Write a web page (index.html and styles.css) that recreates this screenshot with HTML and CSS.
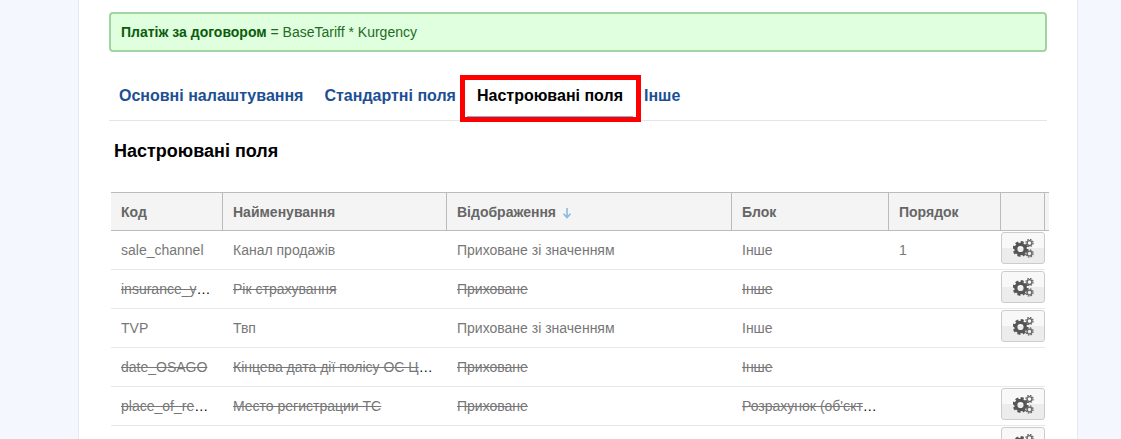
FILE: index.html
```html
<!DOCTYPE html>
<html lang="uk">
<head>
<meta charset="utf-8">
<title>Настроювані поля</title>
<link rel="stylesheet" href="styles.css">
</head>
<body>
<svg class="defs" width="0" height="0" aria-hidden="true">
  <defs>
    <g id="gear-big">
      <circle cx="0" cy="0" r="4.7" fill="none" stroke="#555" stroke-width="3.2"/>
      <circle cx="0" cy="0" r="6.7" fill="none" stroke="#555" stroke-width="2.4" stroke-dasharray="3 2.26"/>
    </g>
    <g id="gear-small">
      <circle cx="0" cy="0" r="2.4" fill="none" stroke="#666" stroke-width="1.4"/>
      <circle cx="0" cy="0" r="3.6" fill="none" stroke="#666" stroke-width="1.2" stroke-dasharray="1.6 1.23"/>
    </g>
    <symbol id="cogs" viewBox="0 0 21 19">
      <use href="#gear-big" x="7.5" y="10"/>
      <use href="#gear-small" x="16.5" y="4"/>
      <use href="#gear-small" x="16.5" y="14.5"/>
    </symbol>
  </defs>
</svg>
<main class="panel">
  <div class="alert"><b>Платіж за договором</b> = BaseTariff * Kurgency</div>
  <nav class="tabs">
    <a class="tab">Основні налаштування</a>
    <a class="tab">Стандартні поля</a>
    <a class="tab tab-active">Настроювані поля<span class="highlight"></span></a>
    <a class="tab">Інше</a>
  </nav>
  <h2 class="title">Настроювані поля</h2>
  <table class="grid">
    <colgroup>
      <col class="c-code"><col class="c-name"><col class="c-view"><col class="c-block"><col class="c-order"><col class="c-act"><col class="c-gap">
    </colgroup>
    <thead>
      <tr>
        <th>Код</th>
        <th>Найменування</th>
        <th>Відображення <svg class="sort" width="10" height="12" viewBox="0 0 10 12"><path d="M5 1v9M1.5 6.8 5 10.5l3.5-3.7" fill="none" stroke="#8db8de" stroke-width="1.6"/></svg></th>
        <th>Блок</th>
        <th>Порядок</th>
        <th></th>
        <th class="gap"></th>
      </tr>
    </thead>
    <tbody>
      <tr>
        <td><span>sale_channel</span></td>
        <td><span>Канал продажів</span></td>
        <td><span>Приховане зі значенням</span></td>
        <td><span>Інше</span></td>
        <td><span>1</span></td>
        <td class="act"><button class="btn"><svg width="21" height="19"><use href="#cogs"/></svg></button></td>
        <td class="gap"></td>
      </tr>
      <tr class="off">
        <td><span>insurance_year</span></td>
        <td><span>Рік страхування</span></td>
        <td><span>Приховане</span></td>
        <td><span>Інше</span></td>
        <td></td>
        <td class="act"><button class="btn"><svg width="21" height="19"><use href="#cogs"/></svg></button></td>
        <td class="gap"></td>
      </tr>
      <tr>
        <td><span>TVP</span></td>
        <td><span>Твп</span></td>
        <td><span>Приховане зі значенням</span></td>
        <td><span>Інше</span></td>
        <td></td>
        <td class="act"><button class="btn"><svg width="21" height="19"><use href="#cogs"/></svg></button></td>
        <td class="gap"></td>
      </tr>
      <tr class="off">
        <td><span>date_OSAGO</span></td>
        <td><span>Кінцева дата дії полісу ОС ЦПВ ВНТЗ</span></td>
        <td><span>Приховане</span></td>
        <td><span>Інше</span></td>
        <td></td>
        <td class="act"></td>
        <td class="gap"></td>
      </tr>
      <tr class="off">
        <td><span>place_of_registration</span></td>
        <td><span>Место регистрации ТС</span></td>
        <td><span>Приховане</span></td>
        <td><span>Розрахунок (об'єкт страхування)</span></td>
        <td></td>
        <td class="act"><button class="btn"><svg width="21" height="19"><use href="#cogs"/></svg></button></td>
        <td class="gap"></td>
      </tr>
      <tr>
        <td></td>
        <td></td>
        <td></td>
        <td></td>
        <td></td>
        <td class="act"><button class="btn"><svg width="21" height="19"><use href="#cogs"/></svg></button></td>
        <td class="gap"></td>
      </tr>
    </tbody>
  </table>
</main>
</body>
</html>
```
FILE: styles.css
```css
html, body {
  margin: 0;
  height: 439px;
  overflow: hidden;
  background: #f4f7fe;
}
body {
  font-family: "Liberation Sans", Arial, sans-serif;
  font-size: 14px;
  color: #000;
}
.defs { position: absolute; }
.panel {
  box-sizing: border-box;
  width: 1000px;
  height: 439px;
  overflow: hidden;
  margin-left: 78px;
  padding: 12px 30px 0;
  background: #fff;
  border-left: 1px solid #e3e8f2;
  border-right: 1px solid #e3e8f2;
}
.alert {
  box-sizing: border-box;
  height: 40px;
  padding: 0 10px;
  line-height: 36px;
  background: #dfffdf;
  border: 2px solid #a2d3a2;
  border-radius: 4px;
  color: #1f6b1f;
}
.alert b { color: #0a5c0a; }
.tabs {
  display: flex;
  gap: 1px;
  margin-top: 26px;
  height: 42px;
  border-bottom: 1px solid #e5e5e5;
}
.tab {
  position: relative;
  box-sizing: border-box;
  height: 40px;
  padding: 0 10px;
  line-height: 36px;
  font-size: 16px;
  font-weight: bold;
  color: #1c4f95;
}
.tab-active {
  color: #000;
  border-bottom: 2px solid #7fb0e2;
}
.highlight {
  position: absolute;
  left: -7px;
  right: -8px;
  top: -3px;
  bottom: -6px;
  border: 5px solid #f00;
}
.title {
  margin: 20px 0 0 5px;
  font-size: 18px;
  line-height: 20px;
  font-weight: bold;
  color: #000;
}
.grid {
  margin: 31px 0 0 2px;
  width: 938px;
  table-layout: fixed;
  border-collapse: separate;
  border-spacing: 0;
}
.c-code { width: 112px; }
.c-name { width: 224px; }
.c-view { width: 285px; }
.c-block { width: 157px; }
.c-order { width: 112px; }
.c-act { width: 44px; }
.c-gap { width: 4px; }
th {
  box-sizing: border-box;
  height: 39px;
  padding: 0 10px;
  text-align: left;
  color: #666;
  font-weight: bold;
  background: #f4f4f4;
  border-top: 1px solid #bbb;
  border-bottom: 1px solid #bbb;
  border-right: 1px solid #bbb;
}
th.gap { border-right: 0; padding: 0; }
.sort { vertical-align: -2px; margin-left: 2px; }
td {
  box-sizing: border-box;
  height: 39px;
  padding: 0 10px;
  white-space: nowrap;
  overflow: hidden;
  text-overflow: ellipsis;
  border-bottom: 1px solid #e8e8e8;
}
td span { color: #777; }
td.act { padding: 1px 0 0; vertical-align: top; }
td.gap { padding: 0; border-bottom: 0; }
.off span { text-decoration: line-through; }
.btn {
  display: flex;
  align-items: center;
  justify-content: center;
  box-sizing: border-box;
  width: 44px;
  height: 32px;
  padding: 0;
  border: 1px solid #ccc;
  border-radius: 3px;
  background: linear-gradient(#f8f8f8 0, #f8f8f8 50%, #ececec 50%, #ececec 100%);
}
```
